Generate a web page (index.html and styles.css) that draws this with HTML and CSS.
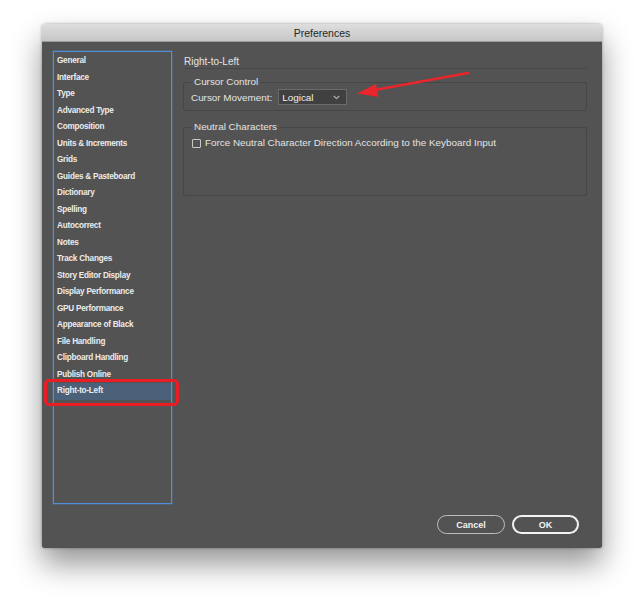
FILE: index.html
```html
<!DOCTYPE html>
<html>
<head>
<meta charset="utf-8">
<title>Preferences</title>
<link rel="stylesheet" href="styles.css">
</head>
<body>
<div class="window">
  <div class="titlebar">Preferences</div>
  <div class="body">
    <div class="main">
      <ul class="sidebar">
        <li>General</li>
        <li>Interface</li>
        <li>Type</li>
        <li>Advanced Type</li>
        <li>Composition</li>
        <li>Units &amp; Increments</li>
        <li>Grids</li>
        <li>Guides &amp; Pasteboard</li>
        <li>Dictionary</li>
        <li>Spelling</li>
        <li>Autocorrect</li>
        <li>Notes</li>
        <li>Track Changes</li>
        <li>Story Editor Display</li>
        <li>Display Performance</li>
        <li>GPU Performance</li>
        <li>Appearance of Black</li>
        <li>File Handling</li>
        <li>Clipboard Handling</li>
        <li>Publish Online</li>
        <li class="selected">Right-to-Left</li>
      </ul>
      <div class="panel">
        <div class="heading">Right-to-Left</div>
        <fieldset class="group group-cursor">
          <legend>Cursor Control</legend>
          <div class="row">
            <span class="label">Cursor Movement:</span>
            <div class="select">
              <span>Logical</span>
              <svg class="chev" width="7" height="5" viewBox="0 0 7 5"><path d="M0.8 1 L3.5 3.6 L6.2 1" fill="none" stroke="#b8b8b8" stroke-width="1.1"/></svg>
            </div>
          </div>
        </fieldset>
        <fieldset class="group group-neutral">
          <legend>Neutral Characters</legend>
          <label class="check">
            <span class="box"></span>
            <span>Force Neutral Character Direction According to the Keyboard Input</span>
          </label>
        </fieldset>
      </div>
    </div>
    <div class="footer">
      <button class="btn">Cancel</button>
      <button class="btn btn-default">OK</button>
    </div>
  </div>
</div>
<div class="callout"></div>
<svg class="arrow" width="644" height="609" viewBox="0 0 644 609">
  <line x1="468" y1="73" x2="372" y2="90.5" stroke="#e8262b" stroke-width="2.6" stroke-linecap="round"/>
  <polygon points="357,93.5 376,84 378.5,97" fill="#e8262b"/>
</svg>
</body>
</html>
```

FILE: styles.css
```css
html, body {
  margin: 0;
  padding: 0;
  background: #ffffff;
}

body {
  width: 644px;
  height: 609px;
  overflow: hidden;
  font-family: "Liberation Sans", Arial, sans-serif;
}

.window {
  margin: 24px 0 0 42px;
  width: 560px;
  height: 524px;
  border-radius: 4px 4px 2px 2px;
  overflow: hidden;
  box-shadow: 0 16px 30px rgba(0, 0, 0, 0.42), 0 0 3px rgba(0, 0, 0, 0.35);
  display: flex;
  flex-direction: column;
}

.titlebar {
  height: 17px;
  line-height: 18px;
  text-align: center;
  font-size: 10.5px;
  color: #262626;
  background: linear-gradient(#dedede, #c6c6c6);
  border-bottom: 1px solid #9a9a9a;
  flex: none;
}

.body {
  flex: 1;
  background: #535353;
  padding: 9px 0 0 11px;
  display: flex;
  flex-direction: column;
}

.main {
  display: flex;
  gap: 11px;
  height: 453px;
}

.sidebar {
  list-style: none;
  margin: 0;
  padding: 1px 0 0 0;
  width: 117px;
  height: 450px;
  border: 1px solid #4f8fdc;
  box-shadow: 0 0 0 0.5px rgba(79, 143, 220, 0.5);
  font-weight: bold;
  font-size: 8.2px;
  letter-spacing: -0.25px;
  color: #ececec;
}

.sidebar li {
  height: 16.5px;
  line-height: 16.5px;
  padding-left: 3px;
  white-space: nowrap;
}

.sidebar li.selected {
  background: #4b6079;
}

.panel {
  width: 404px;
  color: #e4e4e4;
  font-size: 9.9px;
}

.heading {
  padding-top: 4px;
  height: 13px;
  line-height: 14px;
  padding-left: 1px;
  font-size: 10px;
  border-bottom: 1px solid #474747;
}

.group {
  margin: 0;
  border: 1px solid #464646;
  border-radius: 2px;
  padding: 0 7px;
  min-width: 0;
}

.group legend {
  padding: 0 3px;
  line-height: 12px;
  font-size: 9.9px;
}

.group-cursor {
  margin-top: 7px;
  padding-bottom: 5px;
}

.group-neutral {
  margin-top: 10px;
  padding-bottom: 46px;
}

.row {
  margin-top: 1px;
  display: flex;
  align-items: center;
  gap: 6px;
}

.select {
  width: 69px;
  height: 16px;
  background: #404040;
  border: 1px solid #6b6b6b;
  display: flex;
  align-items: center;
  justify-content: space-between;
  padding: 0 6px 0 3px;
  box-sizing: border-box;
  color: #f0f0f0;
}

.select span {
  line-height: 13px;
}

.chev {
  display: block;
}

.check {
  margin-top: 4px;
  display: flex;
  align-items: center;
  gap: 4px;
  line-height: 12px;
}

.box {
  width: 7px;
  height: 7px;
  border: 1px solid #c8c8c8;
  border-radius: 1px;
  margin-left: 1px;
}

.footer {
  margin-top: 11px;
  display: flex;
  justify-content: flex-end;
  gap: 7px;
  padding-right: 23px;
}

.btn {
  width: 68px;
  height: 19px;
  border-radius: 10px;
  background: transparent;
  border: 1px solid #bdbdbd;
  color: #f2f2f2;
  font-family: "Liberation Sans", Arial, sans-serif;
  font-weight: bold;
  font-size: 9px;
  padding: 0;
}

.btn-default {
  width: 67px;
  border: 2px solid #f4f4f4;
}

.callout {
  position: absolute;
  left: 44px;
  top: 379px;
  width: 129px;
  height: 21px;
  border: 3px solid #ea1c24;
  border-radius: 5px;
}

.arrow {
  position: absolute;
  left: 0;
  top: 0;
  pointer-events: none;
}
```
